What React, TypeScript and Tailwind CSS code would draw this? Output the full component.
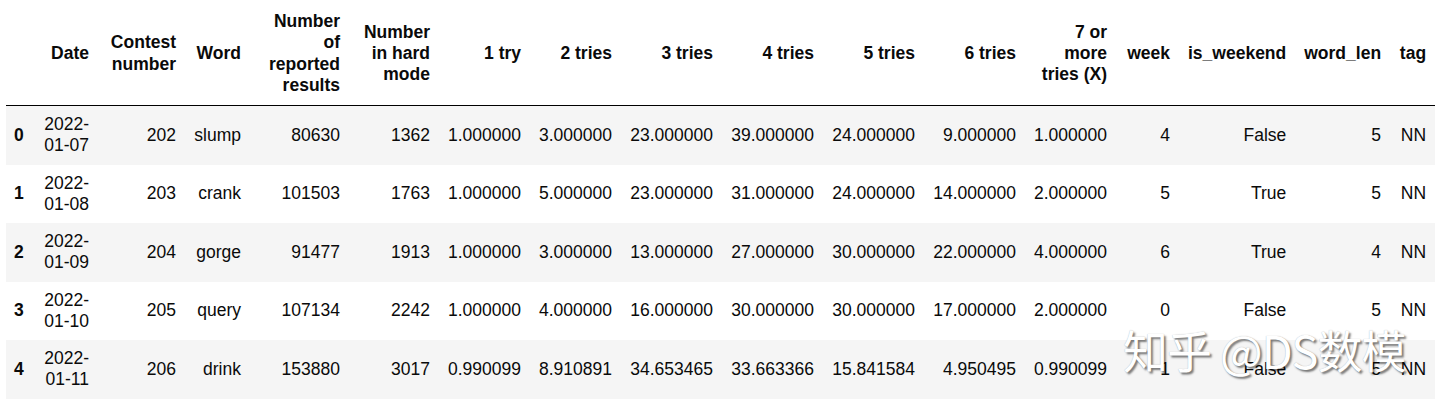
import React from "react";

type Row = {
  idx: string;
  date: [string, string];
  contest: string;
  word: string;
  reported: string;
  hard: string;
  tries: string[];
  week: string;
  weekend: string;
  len: string;
  tag: string;
};

const rows: Row[] = [
  {
    idx: "0",
    date: ["2022-", "01-07"],
    contest: "202",
    word: "slump",
    reported: "80630",
    hard: "1362",
    tries: ["1.000000", "3.000000", "23.000000", "39.000000", "24.000000", "9.000000", "1.000000"],
    week: "4",
    weekend: "False",
    len: "5",
    tag: "NN",
  },
  {
    idx: "1",
    date: ["2022-", "01-08"],
    contest: "203",
    word: "crank",
    reported: "101503",
    hard: "1763",
    tries: ["1.000000", "5.000000", "23.000000", "31.000000", "24.000000", "14.000000", "2.000000"],
    week: "5",
    weekend: "True",
    len: "5",
    tag: "NN",
  },
  {
    idx: "2",
    date: ["2022-", "01-09"],
    contest: "204",
    word: "gorge",
    reported: "91477",
    hard: "1913",
    tries: ["1.000000", "3.000000", "13.000000", "27.000000", "30.000000", "22.000000", "4.000000"],
    week: "6",
    weekend: "True",
    len: "4",
    tag: "NN",
  },
  {
    idx: "3",
    date: ["2022-", "01-10"],
    contest: "205",
    word: "query",
    reported: "107134",
    hard: "2242",
    tries: ["1.000000", "4.000000", "16.000000", "30.000000", "30.000000", "17.000000", "2.000000"],
    week: "0",
    weekend: "False",
    len: "5",
    tag: "NN",
  },
  {
    idx: "4",
    date: ["2022-", "01-11"],
    contest: "206",
    word: "drink",
    reported: "153880",
    hard: "3017",
    tries: ["0.990099", "8.910891", "34.653465", "33.663366", "15.841584", "4.950495", "0.990099"],
    week: "1",
    weekend: "False",
    len: "5",
    tag: "NN",
  },
];

// column widths, left to right
const widths = [
  "w-[28px]",
  "w-[64px]",
  "w-[87px]",
  "w-[65px]",
  "w-[99px]",
  "w-[90px]",
  "w-[91px]",
  "w-[91px]",
  "w-[101px]",
  "w-[101px]",
  "w-[101px]",
  "w-[101px]",
  "w-[91px]",
  "w-[63px]",
  "w-[116px]",
  "w-[94px]",
  "w-[45px]",
];

const headers: React.ReactNode[] = [
  "",
  "Date",
  <>Contest<br />number</>,
  "Word",
  <>Number<br />of<br />reported<br />results</>,
  <>Number<br />in hard<br />mode</>,
  "1 try",
  "2 tries",
  "3 tries",
  "4 tries",
  "5 tries",
  "6 tries",
  <>7 or<br />more<br />tries (X)</>,
  "week",
  "is_weekend",
  "word_len",
  "tag",
];

const td = "px-[9px] py-[8px] text-right align-middle whitespace-nowrap";

export default function App() {
  return (
    <div
      className="relative h-[404px] w-[1440px] overflow-hidden bg-white pt-[2px] pl-[6px] text-[17.5px] leading-[21.25px] text-[#0a0a0a]"
      style={{ fontFamily: '"Liberation Sans", Arial, sans-serif' }}
    >
      <table className="table-fixed border-collapse">
        <colgroup>
          {widths.map((w, i) => (
            <col key={i} className={w} />
          ))}
        </colgroup>
        <thead>
          <tr className="border-b border-black">
            {headers.map((h, i) => (
              <th key={i} className="px-[9px] py-[9px] text-right align-middle font-bold whitespace-nowrap">
                {h}
              </th>
            ))}
          </tr>
        </thead>
        <tbody>
          {rows.map((r, i) => (
            <tr key={r.idx} className={i % 2 === 0 ? "bg-[#f5f5f5]" : "bg-white"}>
              <th className="pl-[8px] pr-[9px] py-[8px] text-left align-middle font-bold">{r.idx}</th>
              <td className={td}>
                {r.date[0]}
                <br />
                {r.date[1]}
              </td>
              <td className={td}>{r.contest}</td>
              <td className={td}>{r.word}</td>
              <td className={td}>{r.reported}</td>
              <td className={td}>{r.hard}</td>
              {r.tries.map((t, j) => (
                <td key={j} className={td}>
                  {t}
                </td>
              ))}
              <td className={td}>{r.week}</td>
              <td className={td}>{r.weekend}</td>
              <td className={td}>{r.len}</td>
              <td className={td}>{r.tag}</td>
            </tr>
          ))}
        </tbody>
      </table>

      {/* watermark over the table */}
      <div
        className="pointer-events-none absolute left-[1123px] top-[318px] text-[45px] leading-[64px] tracking-[-1px] text-white whitespace-nowrap"
        style={{
          fontFamily: '"Noto Sans CJK SC", "Liberation Sans", sans-serif',
          fontWeight: 400,
          textShadow: "2px 2px 2px rgba(0,0,0,0.5), 0 0 1px rgba(0,0,0,0.3)",
        }}
      >
        知乎 @DS数模
      </div>
    </div>
  );
}
